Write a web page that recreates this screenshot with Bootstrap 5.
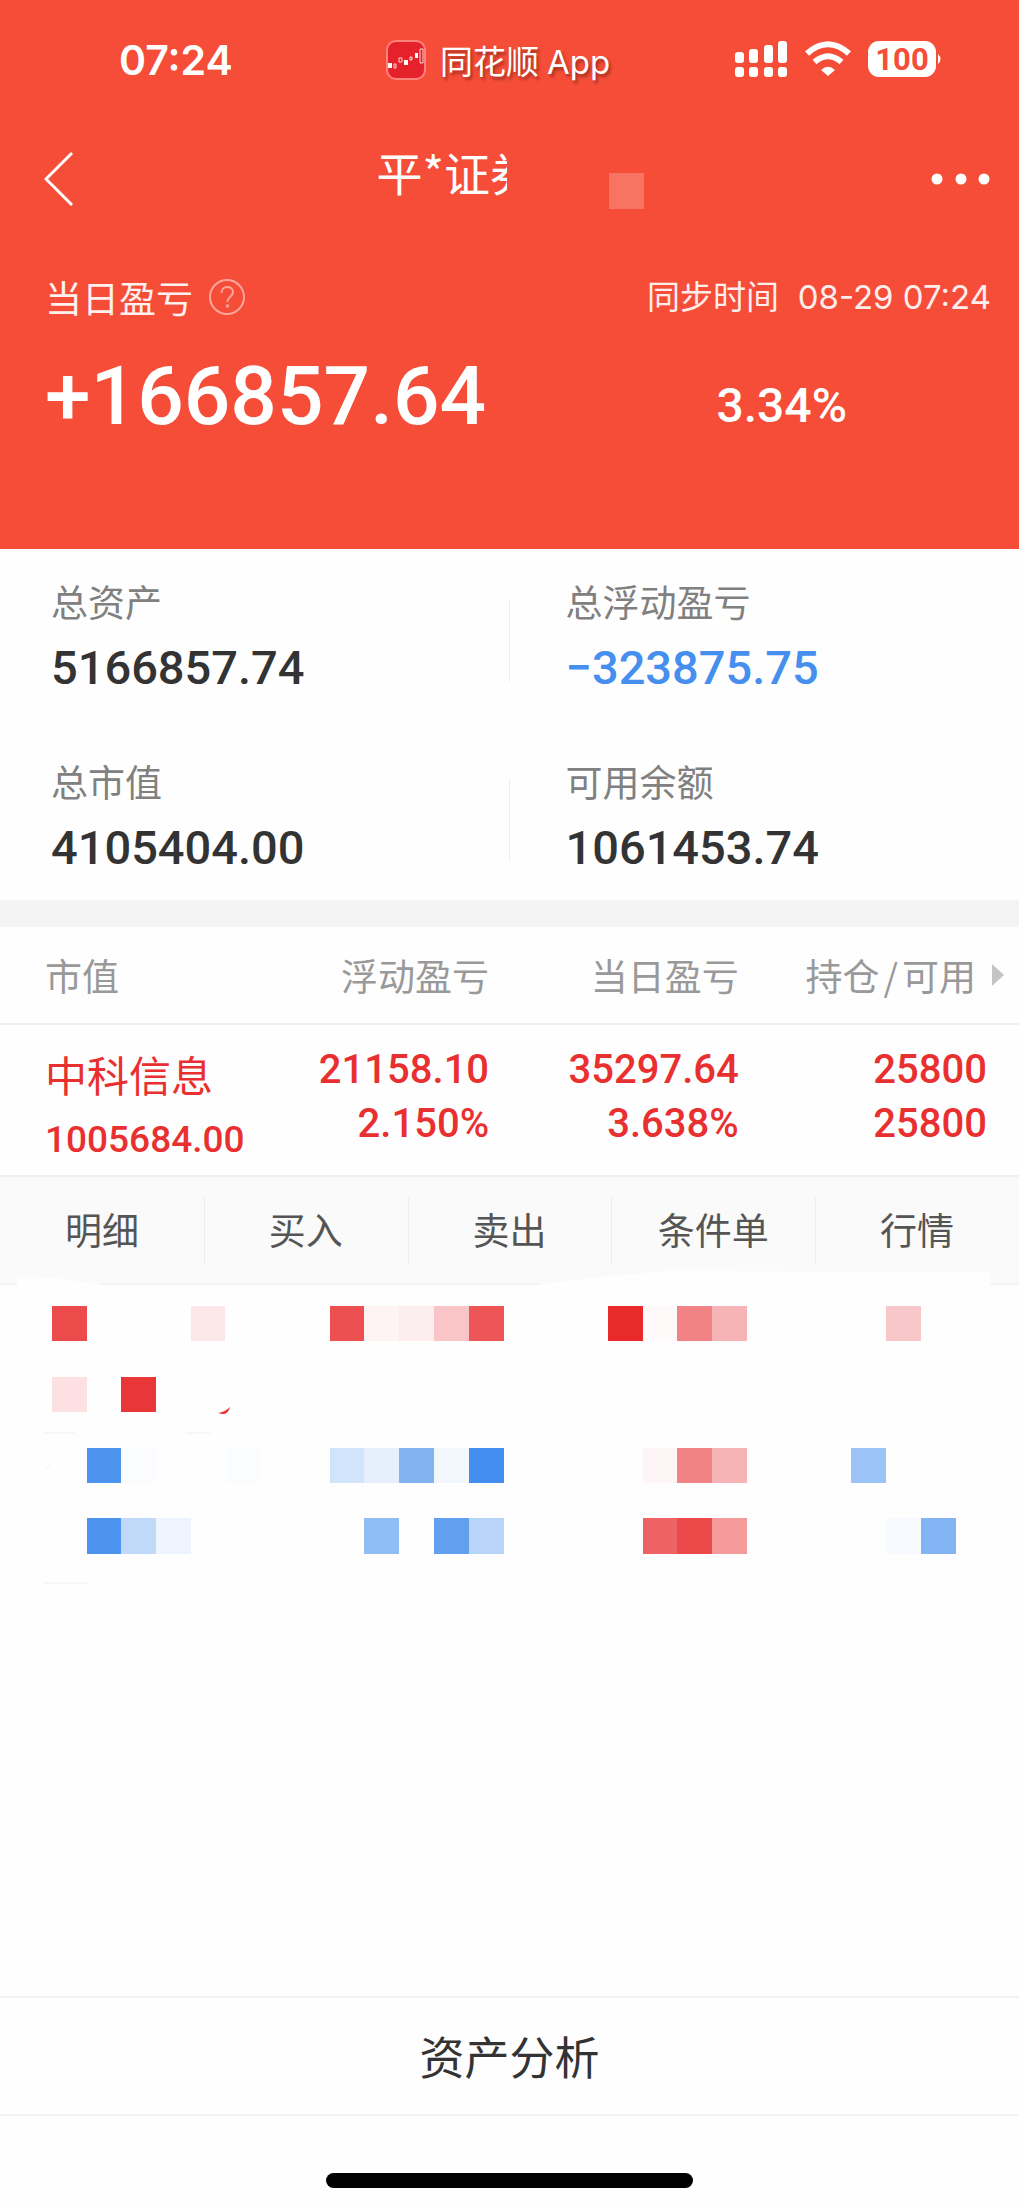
<!DOCTYPE html>
<html lang="zh-CN">
<head>
<meta charset="utf-8">
<meta name="viewport" content="width=device-width, initial-scale=1">
<title>当日盈亏</title>
<link href="https://cdn.jsdelivr.net/npm/bootstrap@5.3.0/dist/css/bootstrap.min.css" rel="stylesheet">
<script src="https://cdn.jsdelivr.net/npm/bootstrap@5.3.0/dist/js/bootstrap.bundle.min.js"></script>
<style>
body { font-family: "Noto Sans CJK SC", sans-serif; color: #333; background: #fefefe; font-size: 37px; line-height: 54px; }
.hero { background: #f54d38; color: #fff; height: 549px; }
.status-bar { height: 118px; padding: 2px 76px 0 119px; }
.clock { font: 600 41px/48px Inter, sans-serif; width: 267px; }
.app-name { font-family: Inter, "Noto Sans CJK SC", sans-serif; font-size: 33px; line-height: 44px; text-shadow: 2px 3px 3px rgba(90, 20, 10, .5); padding-left: 14px; }
.title-bar { height: 122px; padding: 0 28px 0 44px; }
.icon-btn { background: none; border: 0; padding: 0; color: inherit; display: flex; }
.back-btn { width: 46px; }
.account { font-size: 46px; font-weight: 400; line-height: 56px; width: 130px; white-space: nowrap; overflow: hidden; margin: 0 102px 0 0; padding-bottom: 16px; }
.masked { width: 35px; height: 36px; background: #f77462; }
.hero-main { padding: 30px 28px 0 45px; }
.sync-time { font-family: Inter, "Noto Sans CJK SC", sans-serif; font-size: 33px; opacity: .9; }
.day-label { opacity: .92; }
.figure-num { font-family: Roboto, sans-serif; font-weight: 500; }
.day-total { font-size: 82px; line-height: 112px; }
.day-rate { font-size: 48px; line-height: 64px; padding: 20px 144px 0 0; }
.assets { row-gap: 9px; }
.asset { height: 171px; padding: 25px 0 0 51px; }
.asset dt { font-weight: 400; color: #808080; line-height: 54px; }
.asset dd { font-size: 47px; line-height: 80px; margin: 0; }
.asset-left { background: linear-gradient(#eee, #eee) right 50px / 1px 83px no-repeat; }
.asset-right { padding-left: 56px; }
.fall { color: #468fee; }
.band { height: 27px; background: #f4f4f4; }
.holdings { table-layout: fixed; width: 100%; }
.holdings th { font-weight: 400; color: #999; height: 97px; border-bottom: 2px solid #f0f0f0; white-space: nowrap; padding: 0; }
.holdings td { color: #e93030; font-size: 40px; height: 151px; vertical-align: top; padding: 18px 0 0; border-bottom: 2px solid #efefef; }
.holdings .first-col { padding-left: 45px; }
.holdings .last-col { padding-right: 32px; }
.holdings .last-head { padding-right: 15px; }
.stock-name { font-family: "Noto Sans CJK SC", sans-serif; font-size: 42px; font-weight: 400; line-height: 62px; }
.stock-value { font-size: 37px; line-height: 70px; }
.actions { height: 108px; background: #fafafa; border-bottom: 2px solid #f5f5f5; }
.actions button { flex: 1 1 0; border: 0; background: none; color: #555; padding: 0 0 3px; }
.actions button + button { background: linear-gradient(#ececec, #ececec) left 21px / 1px 66px no-repeat; }
.mosaic { margin-top: -18px; width: 100%; display: block; }
.analysis { border: 0; border-top: 2px solid #f2f2f2; border-bottom: 2px solid #f5f5f5; background: #fefefe; color: #333; font-size: 45px; height: 120px; width: 100%; }
.home-area { height: 93px; padding-top: 57px; }
.home-bar { width: 36%; height: 15px; border-radius: 8px; background: #000; }
</style>
</head>
<body class="d-flex flex-column min-vh-100">
<header class="hero">
  <div class="status-bar d-flex align-items-center">
    <span class="clock">07:24</span>
    <svg width="40" height="40" viewBox="0 0 40 40" aria-hidden="true"><rect x="1" y="1" width="38" height="38" rx="9" fill="#e5222b" stroke="#ff827c" stroke-width="2"/><path d="M2 23h4v5H2zM18 20h4v5h-4zM29 13h3v5h-3z" fill="#fff"/><path d="M8 24h2v4H8zM13 18h3v4h-3zM24 17h2v3h-2zM34 9h3v14h-3z" fill="none" stroke="#ffd5d0"/></svg>
    <span class="app-name pt-1">同花顺<span class="ms-2">App</span></span>
    <div class="d-flex align-items-center ms-auto">
      <svg width="208" height="42" viewBox="0 0 208 42" aria-label="信号、无线网络和电量" role="img">
        <g fill="#fff"><rect y="13" width="9" height="11" rx="3"/><rect x="14" y="10" width="9" height="14" rx="3"/><rect x="29" y="6" width="9" height="18" rx="3"/><rect x="43" y="2" width="9" height="22" rx="3"/><rect y="28" width="9" height="10" rx="3"/><rect x="14" y="28" width="9" height="10" rx="3"/><rect x="29" y="28" width="9" height="10" rx="3"/><rect x="43" y="28" width="9" height="10" rx="3"/><path d="M86 31Q93 24.500 100 31L93 37z"/><rect x="133" y="2" width="68" height="36" rx="11"/><path d="M203 15q5 5 0 10z"/></g>
        <path d="M72 14.500Q93-4 114 14.500M79.500 23Q93 11.500 106.500 23" fill="none" stroke="#fff" stroke-width="6"/>
        <text x="167" y="31" text-anchor="middle" font-family="Roboto, sans-serif" font-size="31" font-weight="700" fill="#f54d38">100</text>
      </svg>
    </div>
  </div>
  <nav class="title-bar d-flex align-items-center">
    <button class="icon-btn back-btn me-auto" aria-label="返回"><svg width="30" height="56" viewBox="0 0 30 56" fill="none" stroke="#fff" stroke-width="3"><path d="M28 2 2 28l26 26"/></svg></button>
    <h1 class="account">平*证券</h1>
    <span class="masked mt-4"></span>
    <button class="icon-btn ms-auto" aria-label="更多"><svg width="61" height="14" viewBox="0 0 61 14" fill="#fff"><circle cx="7" cy="7" r="5.500"/><circle cx="31" cy="7" r="5.500"/><circle cx="54" cy="7" r="5.500"/></svg></button>
  </nav>
  <section class="hero-main">
    <div class="d-flex justify-content-between align-items-center">
      <div class="d-flex align-items-center"><span class="day-label">当日盈亏</span>
        <button class="icon-btn ms-3" aria-label="说明"><svg width="36" height="36" viewBox="0 0 36 36" fill="none" stroke="#fca69b" stroke-width="2"><circle cx="18" cy="18" r="17"/><path d="M12.500 14c0-8 11.500-7.500 11.500-1 0 4.500-5.500 4.500-5.500 10"/><circle cx="18.500" cy="27" r=".8"/></svg></button></div>
      <span class="sync-time">同步时间&nbsp; 08-29 07:24</span>
    </div>
    <div class="d-flex justify-content-between align-items-center pt-3">
      <span class="figure-num day-total">+166857.64</span>
      <span class="figure-num day-rate">3.34%</span>
    </div>
  </section>
</header>
<main class="d-flex flex-column flex-grow-1">
  <dl class="assets row g-0 mb-0">
    <div class="col-6 asset asset-left"><dt>总资产</dt><dd class="figure-num">5166857.74</dd></div>
    <div class="col-6 asset asset-right"><dt>总浮动盈亏</dt><dd class="figure-num fall">−323875.75</dd></div>
    <div class="col-6 asset asset-left"><dt>总市值</dt><dd class="figure-num">4105404.00</dd></div>
    <div class="col-6 asset asset-right"><dt>可用余额</dt><dd class="figure-num">1061453.74</dd></div>
  </dl>
  <div class="band"></div>
  <table class="holdings">
    <colgroup><col style="width:25%"><col style="width:23%"><col style="width:24.500%"><col></colgroup>
    <thead><tr><th class="first-col">市值</th><th class="text-end">浮动盈亏</th><th class="text-end">当日盈亏</th>
      <th class="last-head"><div class="d-flex justify-content-end align-items-center"><span>持仓<span class="mx-1">/</span>可用</span><svg class="ms-3" width="12" height="22" viewBox="0 0 12 22" fill="#c4c4c4" aria-hidden="true"><path d="M0 0 12 11 0 22z"/></svg></div></th></tr></thead>
    <tbody><tr class="figure-num">
      <td class="first-col"><div class="stock-name">中科信息</div><div class="stock-value">1005684.00</div></td>
      <td class="text-end">21158.10<br>2.150%</td>
      <td class="text-end">35297.64<br>3.638%</td>
      <td class="last-col text-end">25800<br>25800</td>
    </tr></tbody>
  </table>
  <div class="actions d-flex">
    <button>明细</button><button>买入</button><button>卖出</button><button>条件单</button><button>行情</button>
  </div>
  <svg class="mosaic" viewBox="0 1267 1019 330" aria-hidden="true">
    <path d="M17 1290V1277H43L100 1284V1290zM540 1290V1284L600 1277 665 1271 990 1272V1290z" fill="#fefefe"/>
    <g shape-rendering="crispEdges">
      <path d="M52 1306h35v35H52z" fill="#ec4b4b"/><path d="M191 1306h34v35h-34z" fill="#fde8e9"/><path d="M330 1306h34v35h-34z" fill="#ec5051"/><path d="M364 1306h35v35h-35z" fill="#fef4f4"/><path d="M399 1306h35v35h-35z" fill="#fceeee"/><path d="M434 1306h35v35h-35z" fill="#f9c5c6"/><path d="M469 1306h35v35h-35z" fill="#ee5557"/>
      <path d="M608 1306h35v35h-35z" fill="#e92a2b"/><path d="M643 1306h34v35h-34z" fill="#fffafa"/><path d="M677 1306h35v35h-35z" fill="#f18384"/><path d="M712 1306h35v35h-35z" fill="#f7b4b6"/><path d="M886 1306h35v35h-35z" fill="#f8c7c9"/>
      <path d="M52 1377h35v35H52z" fill="#fce0e2"/><path d="M121 1377h35v35h-35z" fill="#e93739"/>
      <path d="M87 1448h34v35H87zM87 1518h34v36H87z" fill="#4d94ee"/><path d="M121 1448h35v35h-35zM226 1448h35v35h-35z" fill="#fafcff"/><path d="M121 1518h35v36h-35z" fill="#c1d9f9"/><path d="M156 1518h35v36h-35z" fill="#edf4fe"/>
      <path d="M330 1448h34v35h-34z" fill="#d2e4fb"/><path d="M364 1448h35v35h-35z" fill="#e6f0fd"/><path d="M399 1448h35v35h-35z" fill="#83b3f1"/><path d="M434 1448h35v35h-35z" fill="#f2f7fe"/><path d="M469 1448h35v35h-35z" fill="#438eee"/>
      <path d="M643 1448h34v35h-34z" fill="#fef5f6"/><path d="M677 1448h35v35h-35z" fill="#f18384"/><path d="M712 1448h35v35h-35z" fill="#f7b4b6"/><path d="M851 1448h35v35h-35z" fill="#9cc4f6"/>
      <path d="M364 1518h35v36h-35z" fill="#91bdf5"/><path d="M434 1518h35v36h-35z" fill="#60a0ef"/><path d="M469 1518h35v36h-35z" fill="#b9d5f9"/>
      <path d="M643 1518h34v36h-34z" fill="#ee6265"/><path d="M677 1518h35v36h-35z" fill="#eb494a"/><path d="M712 1518h35v36h-35z" fill="#f59b9b"/><path d="M886 1518h35v36h-35z" fill="#f7faff"/><path d="M921 1518h35v36h-35z" fill="#83b4f3"/>
    </g>
    <path d="M218 1413q7-1 12-6-2 8-8 7z" fill="#e93739"/>
    <path d="M43 1433h32M186 1433h24M43 1583h46M46 1468l4-3" stroke="#f7f7f7" stroke-width="2"/>
  </svg>
  <button class="analysis mt-auto">资产分析</button>
</main>
<footer class="home-area"><div class="home-bar mx-auto"></div></footer>
</body>
</html>
